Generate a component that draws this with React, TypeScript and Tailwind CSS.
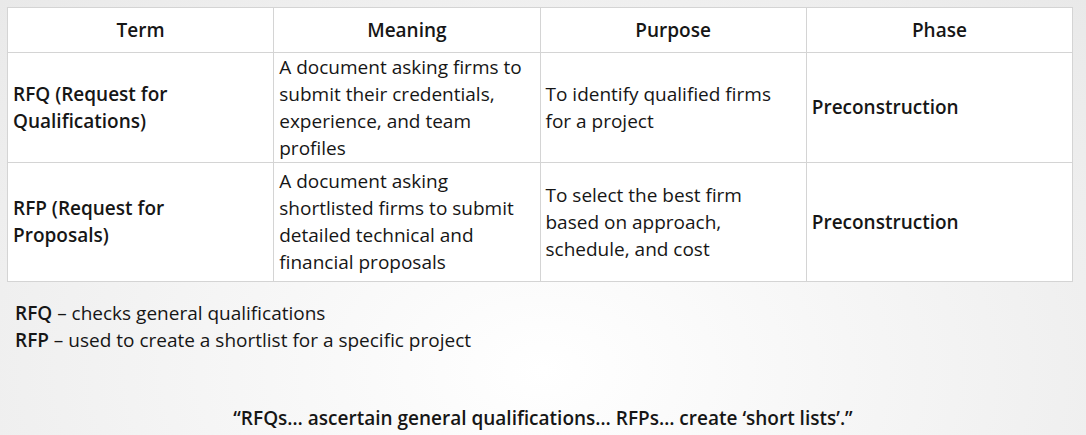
import React from 'react';

const rows = [
  {
    term: ['RFQ (Request for', 'Qualifications)'],
    meaning: ['A document asking firms to', 'submit their credentials,', 'experience, and team', 'profiles'],
    purpose: ['To identify qualified firms', 'for a project'],
    phase: 'Preconstruction',
    h: 'h-[110px]',
  },
  {
    term: ['RFP (Request for', 'Proposals)'],
    meaning: ['A document asking', 'shortlisted firms to submit', 'detailed technical and', 'financial proposals'],
    purpose: ['To select the best firm', 'based on approach,', 'schedule, and cost'],
    phase: 'Preconstruction',
    h: 'h-[119px]',
  },
];

function Lines({ lines }: { lines: string[] }) {
  return (
    <>
      {lines.map((l) => (
        <span key={l} className="block whitespace-nowrap">
          {l}
        </span>
      ))}
    </>
  );
}

export default function App() {
  return (
    <div
      className="w-[1086px] h-[435px] overflow-hidden text-[#161616] bg-[radial-gradient(ellipse_at_50%_85%,#ffffff_0%,#f6f6f6_40%,#e9e9e9_100%)]"
      style={{ fontFamily: '"Open Sans", "Noto Sans", sans-serif' }}
    >
      <div className="pt-[7px] pl-[7px]">
        <table className="w-[1066px] table-fixed border-collapse bg-white text-[19px] leading-[27px]">
          <thead>
            <tr className="h-[45px]">
              {['Term', 'Meaning', 'Purpose', 'Phase'].map((t) => (
                <th key={t} className="border border-[#d4d4d4] font-semibold text-center align-middle">
                  {t}
                </th>
              ))}
            </tr>
          </thead>
          <tbody>
            {rows.map((r) => (
              <tr key={r.term[0]} className={r.h}>
                <td className="border border-[#d4d4d4] px-[5px] font-semibold align-middle">
                  <Lines lines={r.term} />
                </td>
                <td className="border border-[#d4d4d4] px-[5px] align-middle">
                  <Lines lines={r.meaning} />
                </td>
                <td className="border border-[#d4d4d4] px-[5px] align-middle">
                  <Lines lines={r.purpose} />
                </td>
                <td className="border border-[#d4d4d4] px-[5px] font-semibold align-middle">{r.phase}</td>
              </tr>
            ))}
          </tbody>
        </table>
      </div>

      <div className="pl-[15px] pt-[18px] text-[19px] leading-[27px]">
        <p>
          <span className="font-semibold">RFQ</span> – checks general qualifications
        </p>
        <p>
          <span className="font-semibold">RFP</span> – used to create a shortlist for a specific project
        </p>
      </div>

      <p className="mt-[51px] text-center text-[19px] leading-[27px] font-semibold">
        “RFQs… ascertain general qualifications… RFPs… create ‘short lists’.”
      </p>
    </div>
  );
}
